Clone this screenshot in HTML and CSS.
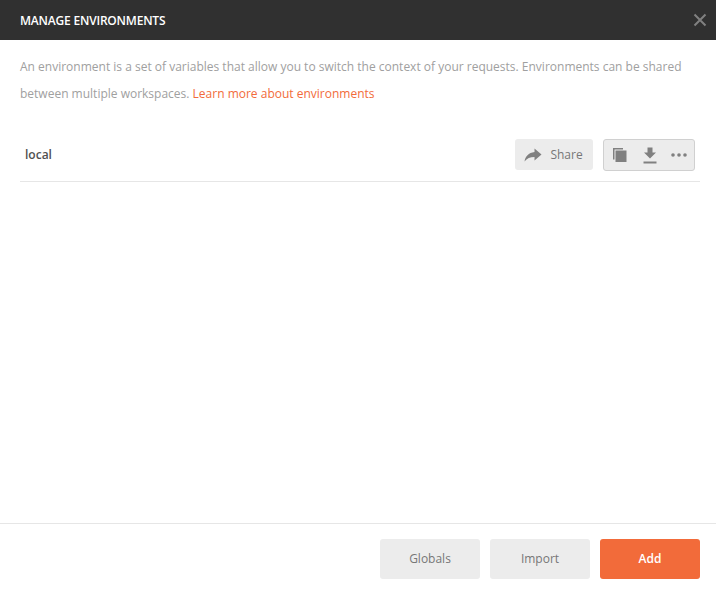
FILE: index.html
```html
<!DOCTYPE html>
<html lang="en">
<head>
<meta charset="utf-8">
<title>Manage Environments</title>
<link rel="stylesheet" href="styles.css">
</head>
<body>
<div class="modal">
  <header class="header">
    <h1 class="title">MANAGE ENVIRONMENTS</h1>
    <button class="close" aria-label="Close">
      <svg width="14" height="14" viewBox="0 0 14 14"><path d="M1.5 1.5l11 11M12.5 1.5l-11 11" stroke="#808080" stroke-width="2" fill="none"/></svg>
    </button>
  </header>
  <main class="content">
    <div class="intro">
      <p class="line">An environment is a set of variables that allow you to switch the context of your requests. Environments can be shared</p>
      <p class="line"><span>between multiple workspaces.</span> <a class="link" href="#">Learn more about environments</a></p>
    </div>
    <div class="env-row">
      <span class="env-name">local</span>
      <div class="env-actions">
        <button class="share">
          <svg width="18" height="14" viewBox="0 0 18 14"><path d="M10.5 0.5L17.5 6.5L10.5 12.5V9C6 9 3 10.3 0.5 13.5C1.2 8.5 4.5 4.7 10.5 4Z" fill="#808080"/></svg>
          <span>Share</span>
        </button>
        <div class="tools">
          <svg width="16" height="16" viewBox="0 0 16 16"><path d="M1 1H11V2.5H2.5V12.5H1Z" fill="#808080"/><rect x="3.5" y="3.5" width="11" height="11.5" fill="#808080"/></svg>
          <svg width="14" height="17" viewBox="0 0 14 17"><path d="M4.5 0.5H9.5V5.5H13L7 11.5L1 5.5H4.5Z" fill="#808080"/><rect x="0.5" y="14.5" width="13" height="2" fill="#808080"/></svg>
          <svg class="dots" width="16" height="4" viewBox="0 0 16 4"><circle cx="2" cy="2" r="1.8" fill="#808080"/><circle cx="8" cy="2" r="1.8" fill="#808080"/><circle cx="14" cy="2" r="1.8" fill="#808080"/></svg>
        </div>
      </div>
    </div>
  </main>
  <footer class="footer">
    <button class="btn">Globals</button>
    <button class="btn">Import</button>
    <button class="btn primary">Add</button>
  </footer>
</div>
</body>
</html>
```
FILE: styles.css
```css
* { box-sizing: border-box; }
html, body { margin: 0; height: 100%; background: #fff; }
body { font-family: "Open Sans", sans-serif; overflow: hidden; }
button { font-family: inherit; border: 0; padding: 0; }
.modal { width: 716px; height: 597px; display: flex; flex-direction: column; }
.header {
  height: 40px; background: #303030; display: flex; align-items: center;
  justify-content: space-between; padding: 0 9px 0 20px; flex: none;
}
.title { margin: 0; font-size: 12px; font-weight: 600; color: #fff; letter-spacing: -0.2px; }
.close { background: none; display: flex; }
.content { flex: 1; padding: 14px 16px 0 20px; }
.intro { font-size: 12px; line-height: 26.5px; color: #a0a0a0; }
.line { margin: 0; white-space: nowrap; }
.link { color: #f26b3a; text-decoration: none; }
.env-row {
  margin-top: 32px; height: 43px; border-bottom: 1px solid #e6e6e6;
  display: flex; justify-content: space-between; align-items: flex-start; padding: 0 5px;
}
.env-name { font-size: 12px; font-weight: 600; color: #505050; line-height: 32px; }
.env-actions { display: flex; gap: 10px; align-items: flex-start; }
.share {
  width: 78px; height: 31px; background: #ececec; border-radius: 3px; color: #777;
  font-size: 12px; display: flex; align-items: center; justify-content: center; gap: 8px;
  padding-right: 1px;
}
.tools {
  width: 92px; height: 32px; background: #ececec; border: 1px solid #d0d0d0; border-radius: 3px;
  display: flex; align-items: center; gap: 15px; padding-left: 8px;
}
.dots { margin-left: -1px; }
.footer {
  height: 74px; flex: none; border-top: 1px solid #e6e6e6; display: flex;
  justify-content: flex-end; gap: 10px; padding: 15px 16px 0 0;
}
.btn {
  width: 100px; height: 40px; border-radius: 3px; background: #ececec; color: #777;
  font-size: 12px; font-weight: 400; padding-bottom: 2px;
}
.primary { background: #f26b3a; color: #fff; font-weight: 600; }
```
